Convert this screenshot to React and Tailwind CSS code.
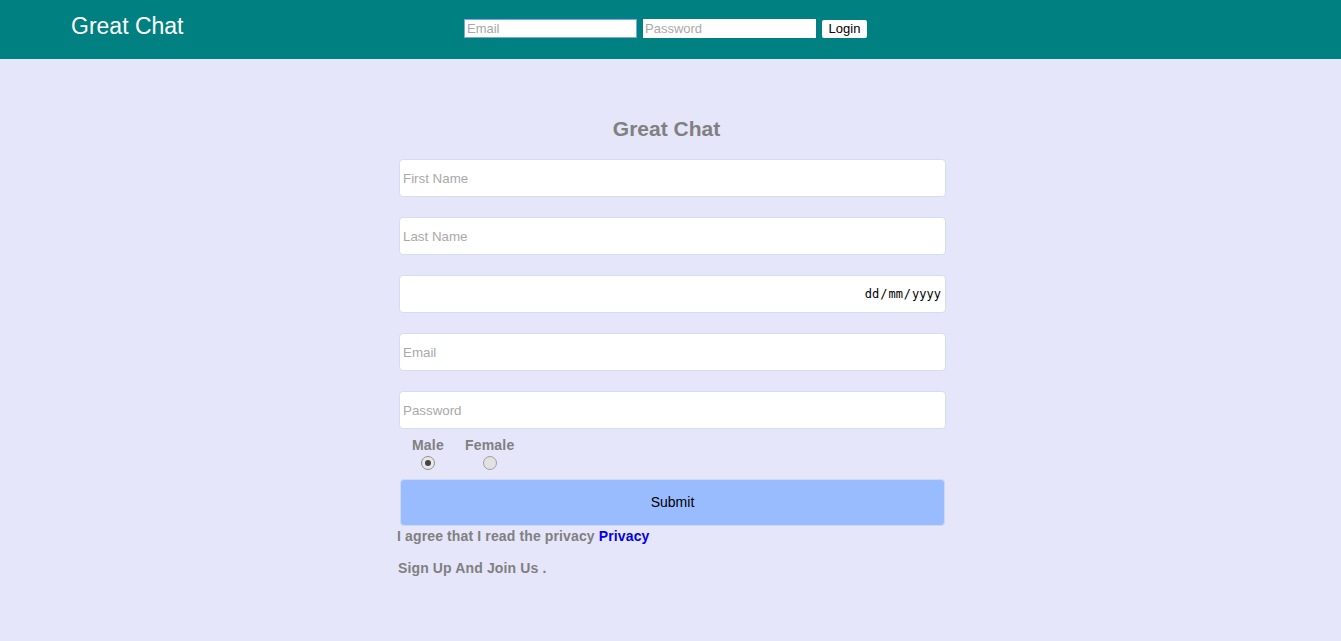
export default function App() {
  const font = { fontFamily: '"Liberation Sans", Arial, sans-serif' };
  const inputCls =
    "block w-full h-[38px] bg-white border border-[#d6dcf0] rounded-[4px] px-[3px] text-[13.33px] text-black placeholder-[#a9a9a9] outline-none";
  return (
    <div className="min-h-[641px] bg-[#e6e6fa]" style={font}>
      <header className="h-[59px] bg-[#008080] flex items-center">
        <div className="w-[393px] pl-[71px] text-white text-[23px] leading-none -mt-[7px]">Great Chat</div>
        <div className="flex items-center gap-[6px] -mt-[2px] ml-[71px]">
          <input
            className="w-[173px] h-[19px] bg-white border border-[#7aa7e8] px-[2px] text-[13px] placeholder-[#a9a9a9] outline-none"
            placeholder="Email"
          />
          <input
            className="w-[173px] h-[19px] bg-white px-[2px] text-[13px] placeholder-[#a9a9a9] outline-none"
            placeholder="Password"
          />
          <button className="w-[45px] h-[18px] bg-white rounded-[2px] text-[13px] text-black leading-none">Login</button>
        </div>
      </header>
      <main className="w-[551px] mx-auto pl-[4px] pt-[59px]">
        <h1 className="text-center text-[21px] font-bold text-[#808080] leading-[22px] ml-[-12px]">Great Chat</h1>
        <div className="mt-[19px] flex flex-col gap-[20px]">
          <input className={inputCls} placeholder="First Name" />
          <input className={inputCls} placeholder="Last Name" />
          <div className={inputCls + " flex items-center justify-end pr-[4px]"}>
            <span className="text-[12px] text-black" style={{ fontFamily: '"DejaVu Sans Mono", monospace' }}>
              dd<span className="mx-[1px]">/</span>mm<span className="mx-[1px]">/</span>yyyy
            </span>
          </div>
          <input className={inputCls} placeholder="Email" />
          <input className={inputCls} placeholder="Password" />
        </div>
        <div className="flex gap-[21px] pl-[13px] mt-[8px] tracking-[0.2px]">
          <div className="flex flex-col items-center">
            <span className="text-[14px] font-bold text-[#808080] leading-[16px]">Male</span>
            <span className="mt-[3px] w-[14px] h-[14px] rounded-full border border-[#8f8f8f] bg-[#e8e8e8] flex items-center justify-center">
              <span className="w-[6px] h-[6px] rounded-full bg-[#444]" />
            </span>
          </div>
          <div className="flex flex-col items-center">
            <span className="text-[14px] font-bold text-[#808080] leading-[16px]">Female</span>
            <span className="mt-[3px] w-[14px] h-[14px] rounded-full border border-[#a0a0a0] bg-[#e2e2e2]" />
          </div>
        </div>
        <button className="mt-[9px] ml-[1px] w-[545px] h-[47px] bg-[#99bbff] rounded-[4px] border border-[#cfd8f0] text-[14px] text-black">
          Submit
        </button>
        <p className="-ml-[2px] mt-0 text-[14px] font-bold text-[#808080] leading-[20px] tracking-[0.13px]">
          I agree that I read the privacy <a className="text-[#0000ee]">Privacy</a>
        </p>
        <p className="-ml-[1px] mt-[12px] text-[14px] font-bold text-[#808080] leading-[20px] tracking-[0.13px]">
          Sign Up And Join Us .
        </p>
      </main>
    </div>
  );
}
